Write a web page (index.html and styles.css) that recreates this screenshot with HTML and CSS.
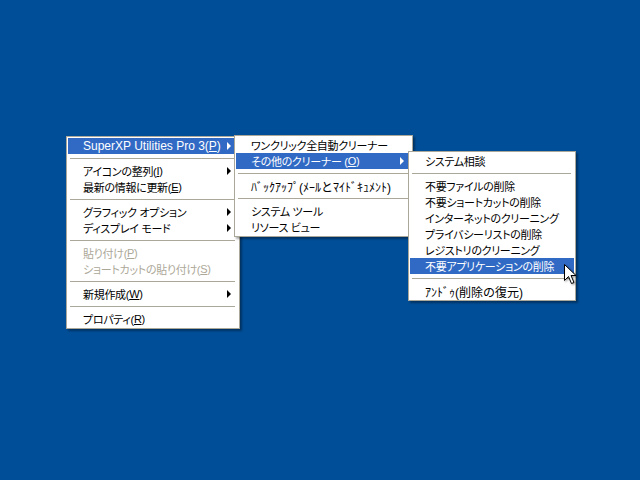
FILE: index.html
```html
<!DOCTYPE html>
<html lang="ja">
<head>
  <meta charset="UTF-8" />
  <title>デスクトップ メニュー</title>
  <link rel="stylesheet" href="styles.css">
</head>
<body>
  <div class="desktop">
    <ul class="menu menu-main">
      <li class="item active latin">SuperXP Utilities Pro 3(<u>P</u>)<span class="arrow"></span></li>
      <li class="sep"></li>
      <li class="item">アイコンの整列(<u>I</u>)<span class="arrow"></span></li>
      <li class="item">最新の情報に更新(<u>E</u>)</li>
      <li class="sep"></li>
      <li class="item">グラフィック オプション<span class="arrow"></span></li>
      <li class="item">ディスプレイ モード<span class="arrow"></span></li>
      <li class="sep"></li>
      <li class="item disabled">貼り付け(<u>P</u>)</li>
      <li class="item disabled">ショートカットの貼り付け(<u>S</u>)</li>
      <li class="sep"></li>
      <li class="item">新規作成(<u>W</u>)<span class="arrow"></span></li>
      <li class="sep"></li>
      <li class="item">プロパティ(<u>R</u>)</li>
    </ul>

    <ul class="menu menu-tools">
      <li class="item">ワンクリック全自動クリーナー</li>
      <li class="item active">その他のクリーナー (<u>O</u>)<span class="arrow"></span></li>
      <li class="sep"></li>
      <li class="item halfwidth">ﾊﾞｯｸｱｯﾌﾟ(ﾒｰﾙとﾏｲﾄﾞｷｭﾒﾝﾄ)</li>
      <li class="sep"></li>
      <li class="item">システム ツール</li>
      <li class="item">リソース ビュー</li>
    </ul>

    <ul class="menu menu-cleaners">
      <li class="item">システム相談</li>
      <li class="sep"></li>
      <li class="item">不要ファイルの削除</li>
      <li class="item">不要ショートカットの削除</li>
      <li class="item">インターネットのクリーニング</li>
      <li class="item">プライバシーリストの削除</li>
      <li class="item">レジストリのクリーニング</li>
      <li class="item active">不要アプリケーションの削除</li>
      <li class="sep"></li>
      <li class="item halfwidth">ｱﾝﾄﾞｩ(削除の復元)</li>
    </ul>

    <svg class="pointer" width="14" height="22" viewBox="0 0 14 22">
      <path d="M0.5 0.5 L0.5 16.5 L4.5 12.5 L7.5 19.5 L10 18.5 L7 11.5 L12 11.5 Z" fill="#fff" stroke="#000" stroke-width="1" />
    </svg>
  </div>
</body>
</html>
```

FILE: styles.css
```css
html, body {
  margin: 0;
  height: 100%;
}
body {
  background: #004e98;
  font-family: "Liberation Sans", "Noto Sans CJK JP", sans-serif;
  font-size: 11px;
  overflow: hidden;
}
.desktop {
  position: relative;
  width: 640px;
  height: 480px;
}
.menu {
  position: absolute;
  margin: 0;
  padding: 1px;
  list-style: none;
  background: #fff;
  border: 1px solid #aca899;
  box-shadow: 2px 2px 2px rgba(0, 0, 0, 0.35);
}
.menu-main {
  left: 66px;
  top: 136px;
  width: 170px;
}
.menu-tools {
  left: 234px;
  top: 135px;
  width: 175px;
}
.menu-cleaners {
  left: 408px;
  top: 151px;
  width: 164px;
}
.item {
  display: flex;
  align-items: center;
  height: 16px;
  padding: 0 7px 0 15px;
  color: #000;
  white-space: nowrap;
  letter-spacing: -0.3px;
  font-feature-settings: "palt";
}
.item.latin {
  font-size: 12px;
  letter-spacing: 0;
}
.item.halfwidth {
  font-size: 12px;
  letter-spacing: 0;
  font-feature-settings: normal;
}
.item u {
  text-underline-offset: 1px;
}
.item.active {
  background: #316ac5;
  color: #fff;
}
.item.disabled {
  color: #aca899;
}
.arrow {
  margin-left: auto;
  width: 0;
  height: 0;
  border-left: 4px solid currentColor;
  border-top: 4px solid transparent;
  border-bottom: 4px solid transparent;
}
.sep {
  height: 1px;
  margin: 4px 3px 4px 2px;
  background: #aca899;
}
.pointer {
  position: absolute;
  left: 564px;
  top: 264px;
  filter: drop-shadow(1px 1px 1px rgba(0, 0, 0, 0.4));
}
```
